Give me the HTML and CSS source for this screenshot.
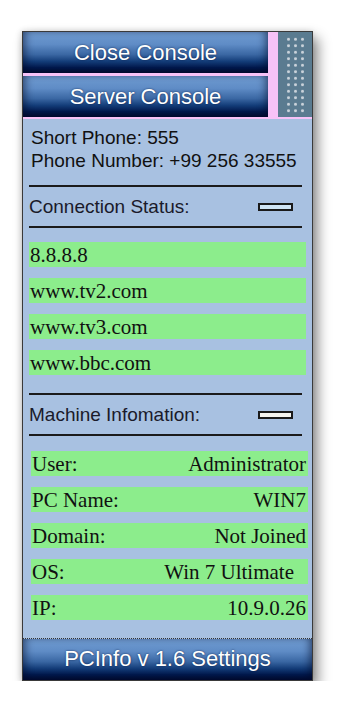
FILE: index.html
```html
<!DOCTYPE html>
<html lang="en">
<head>
  <meta charset="UTF-8" />
  <meta name="viewport" content="width=device-width, initial-scale=1.0"/>
  <title>PCInfo</title>
  <link rel="stylesheet" href="styles.css">
</head>
<body>
  <div class="window">
    <div class="top">
      <div class="buttons">
        <div class="console-btn">Close Console</div>
        <div class="console-btn">Server Console</div>
      </div>
      <div class="grip"></div>
    </div>

    <div class="panel">
      <div class="phone">
        <div>Short Phone: 555</div>
        <div>Phone Number: +99 256 33555</div>
      </div>

      <div class="rule first-rule"></div>
      <div class="status">
        <span>Connection Status:</span>
        <span class="led"></span>
      </div>
      <div class="rule"></div>

      <ul class="hosts">
        <li>8.8.8.8</li>
        <li>www.tv2.com</li>
        <li>www.tv3.com</li>
        <li>www.bbc.com</li>
      </ul>

      <div class="rule mid-rule"></div>
      <div class="status">
        <span>Machine Infomation:</span>
        <span class="led led-off"></span>
      </div>
      <div class="rule"></div>

      <ul class="machine">
        <li><span>User:</span><span>Administrator</span></li>
        <li><span>PC Name:</span><span>WIN7</span></li>
        <li><span>Domain:</span><span>Not Joined</span></li>
        <li><span>OS:</span><span class="os">Win 7 Ultimate</span></li>
        <li><span>IP:</span><span>10.9.0.26</span></li>
      </ul>
    </div>

    <div class="settings-btn">PCInfo v 1.6 Settings</div>
  </div>
</body>
</html>
```

FILE: styles.css
```css
body {
  margin: 0;
  padding: 31px 0 0 22px;
  background: #fff;
  font-family: 'Liberation Sans', Arial, sans-serif;
}

.window {
  width: 289px;
  border: 1px solid #3a3a3a;
  box-shadow: 5px 7px 12px rgba(0, 0, 0, 0.45), -1px 0 6px rgba(0, 0, 0, 0.15);
}

.top {
  display: flex;
  gap: 10px;
  background: #f7c2f7;
  padding-bottom: 2px;
}

.buttons {
  flex: 1;
  display: flex;
  flex-direction: column;
  gap: 3px;
}

.console-btn,
.settings-btn {
  height: 41px;
  box-sizing: border-box;
  padding-top: 7px;
  text-align: center;
  color: #fff;
  font-size: 22px;
  line-height: 28px;
  text-shadow: 0 0 2px rgba(0, 20, 60, 0.8);
  background: linear-gradient(#6f9bd0 0%, #5f8cc6 30%, #3a67a3 55%, #133c78 72%, #021a4e 86%, #000a30 100%);
  box-shadow: inset 6px 0 8px -4px rgba(0, 10, 40, 0.6), inset -6px 0 8px -4px rgba(0, 10, 40, 0.6);
}

.grip {
  width: 34px;
  box-sizing: border-box;
  border: solid #5a7b90;
  border-width: 4px 6px 4px 7px;
  background-color: #5a7b90;
  background-image: radial-gradient(circle, #c9d2da 1.1px, transparent 1.8px);
  background-size: 7px 6.5px;
  background-clip: padding-box;
}

.panel {
  background: #a8c1e1;
  padding: 7px 6px 18px 6px;
  color: #111;
  border-bottom: 1px dotted #333;
}

.phone {
  font-size: 19px;
  line-height: 23px;
  padding-left: 2px;
}

.rule {
  height: 2px;
  background: #1b1b1b;
  margin-right: 4px;
}

.first-rule {
  margin-top: 13px;
}

.mid-rule {
  margin-top: 18px;
}

.status {
  display: flex;
  align-items: center;
  justify-content: space-between;
  height: 39px;
  font-size: 19px;
  padding-right: 13px;
  color: #1a1a2a;
}

.led {
  width: 31px;
  height: 4px;
  border: 2px solid #1a1a1a;
  background: #cfe4f4;
}

.led-off {
  background: #f4f4ee;
}

.hosts,
.machine {
  list-style: none;
  margin: 14px 0 0 0;
  padding: 0;
  display: flex;
  flex-direction: column;
  gap: 11px;
  font-family: 'Liberation Serif', 'Times New Roman', serif;
  font-size: 21px;
}

.hosts li,
.machine li {
  height: 25px;
  line-height: 26px;
  background: #8ced8c;
  padding-left: 1px;
}

.machine {
  margin: 15px -2px 0 2px;
}

.machine li {
  display: flex;
  justify-content: space-between;
  padding-right: 2px;
}

.os {
  padding-right: 12px;
}

.settings-btn {
  padding-top: 6px;
}
```
